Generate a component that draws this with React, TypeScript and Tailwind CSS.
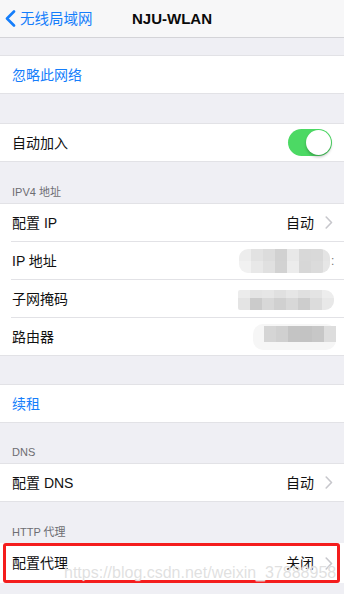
import React from "react";

const Chevron = () => (
  <svg width="8" height="13" viewBox="0 0 8 13" className="shrink-0">
    <polyline points="1.2,1 6.5,6.5 1.2,12" fill="none" stroke="#c7c7cc" strokeWidth="1.6" strokeLinecap="round" strokeLinejoin="round" />
  </svg>
);

const Sep = () => (
  <div className="pl-[11px] bg-white">
    <div className="h-px bg-[#e2e2e6]" />
  </div>
);

const Row = ({ children, className = "" }: { children: React.ReactNode; className?: string }) => (
  <div className={`flex items-center h-[37px] pl-[12px] pr-[11px] bg-white text-[14px] leading-[18px] text-[#111] ${className}`}>
    {children}
  </div>
);

const Value = ({ text }: { text: string }) => (
  <div className="ml-auto flex items-center gap-[11px]">
    <span className="text-[14px] text-[#111]">{text}</span>
    <Chevron />
  </div>
);

const Header = ({ text, h }: { text: string; h: string }) => (
  <div className={`flex items-end pl-[12px] pb-[4px] text-[11px] leading-[14px] text-[#6d6d72] ${h}`}>{text}</div>
);

const Group = ({ children }: { children: React.ReactNode }) => (
  <div className="border-y border-[#e2e2e6] bg-white">{children}</div>
);

const Cells = ({ rows, heights, rounded, shortLast = false }: { rows: string[][]; heights: string[]; rounded: string; shortLast?: boolean }) => (
  <div className={`flex flex-col overflow-hidden ${rounded}`}>
    {rows.map((r, i) => (
      <div key={i} className={`flex ${heights[i]}`}>
        {r.map((c, j) => (
          <div
            key={j}
            className={`h-full ${shortLast && j === r.length - 1 ? "w-[7px]" : "w-[12px]"}`}
            style={{ backgroundColor: c }}
          />
        ))}
      </div>
    ))}
  </div>
);

export default function App() {
  return (
    <div className="w-[344px] h-[594px] overflow-hidden bg-[#efeff4] font-['Liberation_Sans','Noto_Sans_CJK_SC',sans-serif]">
      {/* Nav */}
      <div className="grid grid-cols-[1fr_auto_1fr] items-center h-[38px] bg-[#f7f7f8] border-b border-[#d4d4d8]">
        <div className="flex items-center pl-[5px] gap-[4px] text-[#157efb] text-[14.5px] leading-[18px]">
          <svg width="11" height="17" viewBox="0 0 11 17">
            <polyline points="9,1.5 2,8.5 9,15.5" fill="none" stroke="#157efb" strokeWidth="2.6" strokeLinecap="round" strokeLinejoin="round" />
          </svg>
          <span>无线局域网</span>
        </div>
        <div className="text-[15px] font-bold text-[#0a0a0a] leading-[18px]">NJU-WLAN</div>
        <div />
      </div>

      <div className="h-[17px]" />
      <Group>
        <Row className="h-[36px]">
          <span className="text-[#157efb]">忽略此网络</span>
        </Row>
      </Group>

      <div className="h-[29px]" />
      <Group>
        <Row className="h-[36px]">
          <span>自动加入</span>
          <div className="ml-auto mr-[1px] relative w-[44px] h-[27px] rounded-full bg-[#4cd964]">
            <div className="absolute right-[1px] top-[1px] w-[25px] h-[25px] rounded-full bg-white shadow-[0_2px_3px_rgba(0,0,0,0.25)]" />
          </div>
        </Row>
      </Group>

      <Header text="IPV4 地址" h="h-[41px]" />
      <Group>
        <Row className="h-[36px]">
          <span>配置 IP</span>
          <Value text="自动" />
        </Row>
        <Sep />
        <Row>
          <span>IP 地址</span>
          <div className="ml-auto flex items-center mr-[-2px]">
            <Cells
              rounded="rounded-[9px]"
              shortLast
              heights={["h-[12px]", "h-[12px]"]}
              rows={[
                ["#ededed", "#e2e2e2", "#dcdcdc", "#d1d1d1", "#e8e8e8", "#d8d8d8", "#d9d9d9", "#e4e4e4"],
                ["#f1f1f1", "#e8e8e8", "#e0e0e0", "#d2d2d2", "#ececec", "#d7d7d7", "#dbdbdb", "#e6e6e6"],
              ]}
            />
            <span className="text-[12px] text-[#777] ml-[1px] w-[4px]">:</span>
          </div>
        </Row>
        <Sep />
        <Row className="h-[37px]">
          <span>子网掩码</span>
          <div className="ml-auto mr-[-1px] pt-[2px]">
            <Cells
              rounded="rounded-r-[9px] rounded-l-[2px]"
              heights={["h-[8px]", "h-[12px]"]}
              rows={[
                ["#ececec", "#e4e4e4", "#e6e6e6", "#e0e0e0", "#e6e6e6", "#e0e0e0", "#e4e4e4", "#ededed"],
                ["#e4e4e4", "#cbcbcb", "#d8d8d8", "#d0d0d0", "#d8d8d8", "#cdcdcd", "#dcdcdc", "#e8e8e8"],
              ]}
            />
          </div>
        </Row>
        <Sep />
        <Row>
          <span>路由器</span>
          <div className="ml-auto mr-[-3px] flex items-start pl-[11px] pb-[8px] pt-[2px] rounded-[10px] bg-[#f6f6f6]">
            <Cells
              rounded="rounded-none"
              heights={["h-[16px]"]}
              rows={[["#d5d5d5", "#d0d0d0", "#c4c4c4", "#c3c3c3", "#c7c7c7", "#dddddd"]]}
            />
          </div>
        </Row>
      </Group>

      <div className="h-[28px]" />
      <Group>
        <Row>
          <span className="text-[#157efb]">续租</span>
        </Row>
      </Group>

      <Header text="DNS" h="h-[40px]" />
      <Group>
        <Row>
          <span>配置 DNS</span>
          <Value text="自动" />
        </Row>
      </Group>

      <Header text="HTTP 代理" h="h-[41px]" />
      <div className="relative bg-white">
        <Row className="h-[40px]">
          <span>配置代理</span>
          <Value text="关闭" />
        </Row>
        <div className="absolute left-[3px] right-[4px] top-0 bottom-0 border-[3px] border-[#f41d1d] rounded-[3px]" />
        <div className="absolute left-[64px] top-[22px] text-[16px] leading-[16px] text-[#d6d6d6]/75 font-['Liberation_Sans',sans-serif] whitespace-nowrap [text-shadow:0_0_1px_#fff]">
          https://blog.csdn.net/weixin_37888958
        </div>
      </div>
    </div>
  );
}
